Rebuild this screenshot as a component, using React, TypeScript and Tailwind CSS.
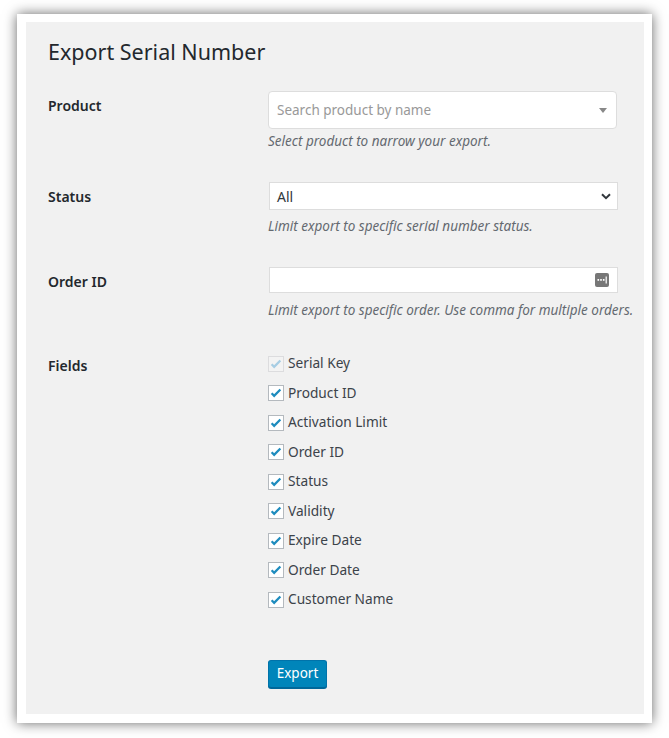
import React from "react";

const font = { fontFamily: '"Noto Sans", "Open Sans", sans-serif' };

const fields = [
  { label: "Serial Key", disabled: true },
  { label: "Product ID" },
  { label: "Activation Limit" },
  { label: "Order ID" },
  { label: "Status" },
  { label: "Validity" },
  { label: "Expire Date" },
  { label: "Order Date" },
  { label: "Customer Name" },
];

function Check({ disabled }: { disabled?: boolean }) {
  return (
    <span
      className={`flex h-4 w-4 shrink-0 items-center justify-center border ${
        disabled ? "border-[#dcdcde] bg-[#f3f3f3]" : "border-[#b4b9be] bg-white"
      }`}
    >
      <svg viewBox="0 0 16 16" className="h-[14px] w-[14px]">
        <path
          d="M3 8.2l2.9 3L13 4"
          fill="none"
          stroke={disabled ? "#a7cde3" : "#1e8cbe"}
          strokeWidth="2.6"
          strokeLinecap="butt"
        />
      </svg>
    </span>
  );
}

function Row({ label, labelTop, top, children }: { label: string; labelTop: string; top: string; children: React.ReactNode }) {
  return (
    <div className={`flex ${top}`}>
      <div className={`w-[220px] shrink-0 ${labelTop} h-5 text-[14px] leading-5 font-semibold text-[#23282d]`}>{label}</div>
      <div className="flex-1">{children}</div>
    </div>
  );
}

export default function App() {
  return (
    <div className="h-[738px] w-[669px] bg-white pl-[17px] pt-[14px]" style={font}>
      <div className="h-[709px] w-[635px] bg-white pb-[9px] pl-[9px] pr-[8px] pt-[8px] shadow-[0_0_12px_rgba(0,0,0,0.6)]">
        <div className="h-[692px] w-[618px] bg-[#f1f1f1] pl-[22px] pt-[15px]">
          <h1 className="h-[30px] text-[21.5px] leading-[30px] font-normal text-[#23282d]">Export Serial Number</h1>

          <Row label="Product" labelTop="mt-[5px]" top="mt-[24px]">
            <div className="flex h-[38px] w-[349px] items-center justify-between rounded-[4px] border border-[#dddddd] bg-white pl-[8px] pr-[9px]">
              <span className="text-[13.5px] text-[#999999]">Search product by name</span>
              <svg viewBox="0 0 8 5" className="h-[5px] w-[8px]">
                <path d="M0 0h8L4 5z" fill="#888888" />
              </svg>
            </div>
            <p className="mt-[2px] h-5 text-[13.5px] leading-5 italic text-[#646970]">Select product to narrow your export.</p>
          </Row>

          <Row label="Status" labelTop="mt-[5px]" top="mt-[31px]">
            <div className="ml-px flex h-[28px] w-[349px] items-center justify-between border border-[#dddddd] bg-white pl-[7px] pr-[6px]">
              <span className="text-[14px] text-[#32373c]">All</span>
              <svg viewBox="0 0 10 7" className="h-[7px] w-[10px]">
                <path d="M1 1.2l4 4 4-4" fill="none" stroke="#32373c" strokeWidth="2" />
              </svg>
            </div>
            <p className="mt-[6px] h-5 text-[13.5px] leading-5 italic text-[#646970]">Limit export to specific serial number status.</p>
          </Row>

          <Row label="Order ID" labelTop="mt-[5px]" top="mt-[31px]">
            <div className="ml-px flex h-[26px] w-[349px] items-center justify-end border border-[#dddddd] bg-white pr-[8px]">
              <svg viewBox="0 0 14 14" className="h-[14px] w-[14px]">
                <rect width="14" height="14" rx="2" fill="#777777" />
                <rect x="2.5" y="6" width="1.6" height="1.8" fill="#fff" />
                <rect x="5.2" y="6" width="1.6" height="1.8" fill="#fff" />
                <rect x="7.9" y="6" width="1.6" height="1.8" fill="#fff" />
                <rect x="10.6" y="3.5" width="1.2" height="7" fill="#fff" />
              </svg>
            </div>
            <p className="mt-[7px] h-5 whitespace-nowrap text-[13.5px] leading-5 italic text-[#646970]">
              Limit export to specific order. Use comma for multiple orders.
            </p>
          </Row>

          <Row label="Fields" labelTop="mt-[7px]" top="mt-[29px]">
            <div className="flex flex-col">
              {fields.map((f) => (
                <label key={f.label} className="flex h-[29.5px] items-center gap-[4px]">
                  <Check disabled={f.disabled} />
                  <span className="text-[13.7px] text-[#3c434a]">{f.label}</span>
                </label>
              ))}
            </div>
          </Row>

          <div className="mt-[45px] pl-[220px]">
            <button className="h-[28px] w-[59px] rounded-[3px] border border-[#0073aa] border-b-[#006799] bg-[#0085ba] text-[13.5px] text-white shadow-[0_1px_0_#006799]">
              Export
            </button>
          </div>
        </div>
      </div>
    </div>
  );
}
